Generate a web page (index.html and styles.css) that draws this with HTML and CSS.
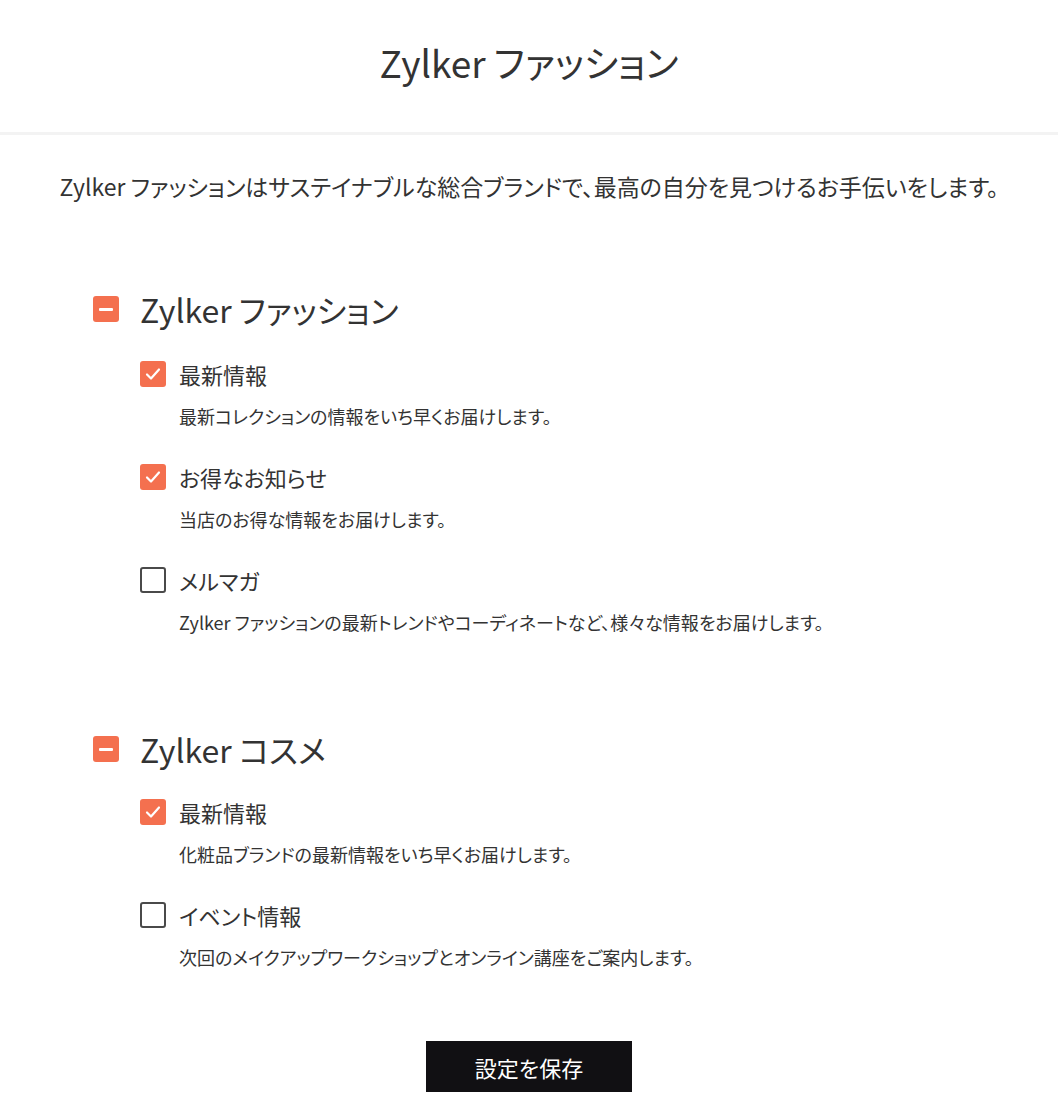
FILE: index.html
```html
<!DOCTYPE html>
<html lang="ja">
<head>
<meta charset="utf-8">
<link rel="stylesheet" href="styles.css">
</head>
<body>
<header class="site-header">
  <h1 class="site-title">Zylker ファッション</h1>
</header>
<main class="content">
  <p class="intro">Zylker ファッションはサステイナブルな総合ブランドで、最高の自分を見つけるお手伝いをします。</p>

  <section class="group">
    <div class="group-head">
      <span class="box box-minus"><span class="minus"></span></span>
      <h2 class="group-title">Zylker ファッション</h2>
    </div>
    <div class="item">
      <div class="item-head">
        <span class="box box-checked"><svg viewBox="0 0 26 26" class="check"><path d="M7 13.5 L11 17.5 L19 8.5" /></svg></span>
        <span class="item-label">最新情報</span>
      </div>
      <p class="item-desc">最新コレクションの情報をいち早くお届けします。</p>
    </div>
    <div class="item">
      <div class="item-head">
        <span class="box box-checked"><svg viewBox="0 0 26 26" class="check"><path d="M7 13.5 L11 17.5 L19 8.5" /></svg></span>
        <span class="item-label">お得なお知らせ</span>
      </div>
      <p class="item-desc">当店のお得な情報をお届けします。</p>
    </div>
    <div class="item">
      <div class="item-head">
        <span class="box box-empty"></span>
        <span class="item-label">メルマガ</span>
      </div>
      <p class="item-desc">Zylker ファッションの最新トレンドやコーディネートなど、様々な情報をお届けします。</p>
    </div>
  </section>

  <section class="group group-second">
    <div class="group-head">
      <span class="box box-minus"><span class="minus"></span></span>
      <h2 class="group-title">Zylker コスメ</h2>
    </div>
    <div class="item">
      <div class="item-head">
        <span class="box box-checked"><svg viewBox="0 0 26 26" class="check"><path d="M7 13.5 L11 17.5 L19 8.5" /></svg></span>
        <span class="item-label">最新情報</span>
      </div>
      <p class="item-desc">化粧品ブランドの最新情報をいち早くお届けします。</p>
    </div>
    <div class="item">
      <div class="item-head">
        <span class="box box-empty"></span>
        <span class="item-label">イベント情報</span>
      </div>
      <p class="item-desc">次回のメイクアップワークショップとオンライン講座をご案内します。</p>
    </div>
  </section>

  <div class="actions">
    <button class="save">設定を保存</button>
  </div>
</main>
</body>
</html>
```
FILE: styles.css
```css
html, body {
  margin: 0;
  padding: 0;
  background: #ffffff;
}
body {
  font-family: "Noto Sans CJK JP", "Noto Sans", sans-serif;
  color: #333333;
  font-feature-settings: "palt" 1;
}
.site-header {
  height: 132px;
  display: flex;
  align-items: center;
  justify-content: center;
  border-bottom: 3px solid #f3f3f3;
}
.site-title {
  margin: 0;
  font-size: 37px;
  font-weight: 400;
  line-height: 1;
  color: #333;
  position: relative;
  top: -4px;
}
.content {
  padding: 0 0 20px 0;
}
.intro {
  margin: 36px 0 0 0;
  text-align: center;
  font-size: 23px;
  line-height: 30px;
}
.group {
  margin-top: 88px;
  padding-left: 93px;
}
.group-second {
  margin-top: 95px;
}
.group-head {
  display: flex;
  align-items: center;
  gap: 21px;
  height: 40px;
}
.group-title {
  margin: 0;
  font-size: 32px;
  font-weight: 400;
  line-height: 40px;
  color: #333;
}
.box {
  width: 26px;
  height: 26px;
  box-sizing: border-box;
  border-radius: 3px;
  display: flex;
  align-items: center;
  justify-content: center;
  flex-shrink: 0;
}
.box-minus {
  background: #f4704f;
}
.minus {
  width: 14px;
  height: 3px;
  background: #ffffff;
  border-radius: 1px;
}
.box-checked {
  background: #f4704f;
}
.check {
  width: 26px;
  height: 26px;
  fill: none;
  stroke: #ffffff;
  stroke-width: 2.2;
  stroke-linecap: round;
  stroke-linejoin: round;
}
.box-empty {
  border: 2.5px solid #4a4a4a;
}
.item {
  padding-left: 47px;
  margin-top: 30px;
}
.group-second .item {
  margin-top: 28px;
}
.item + .item,
.group-second .item + .item {
  margin-top: 34px;
}
.item-head {
  display: flex;
  align-items: center;
  gap: 13px;
  height: 30px;
}
.item-label {
  font-size: 22px;
  line-height: 30px;
}
.item-desc {
  margin: 15px 0 0 39px;
  font-size: 18px;
  line-height: 24px;
}
.actions {
  display: flex;
  justify-content: center;
  margin-top: 72px;
}
.save {
  width: 206px;
  height: 51px;
  background: #111013;
  color: #ffffff;
  border: none;
  border-radius: 0;
  font-family: "Noto Sans CJK JP", sans-serif;
  font-feature-settings: "palt" 1;
  font-size: 22px;
}
```
